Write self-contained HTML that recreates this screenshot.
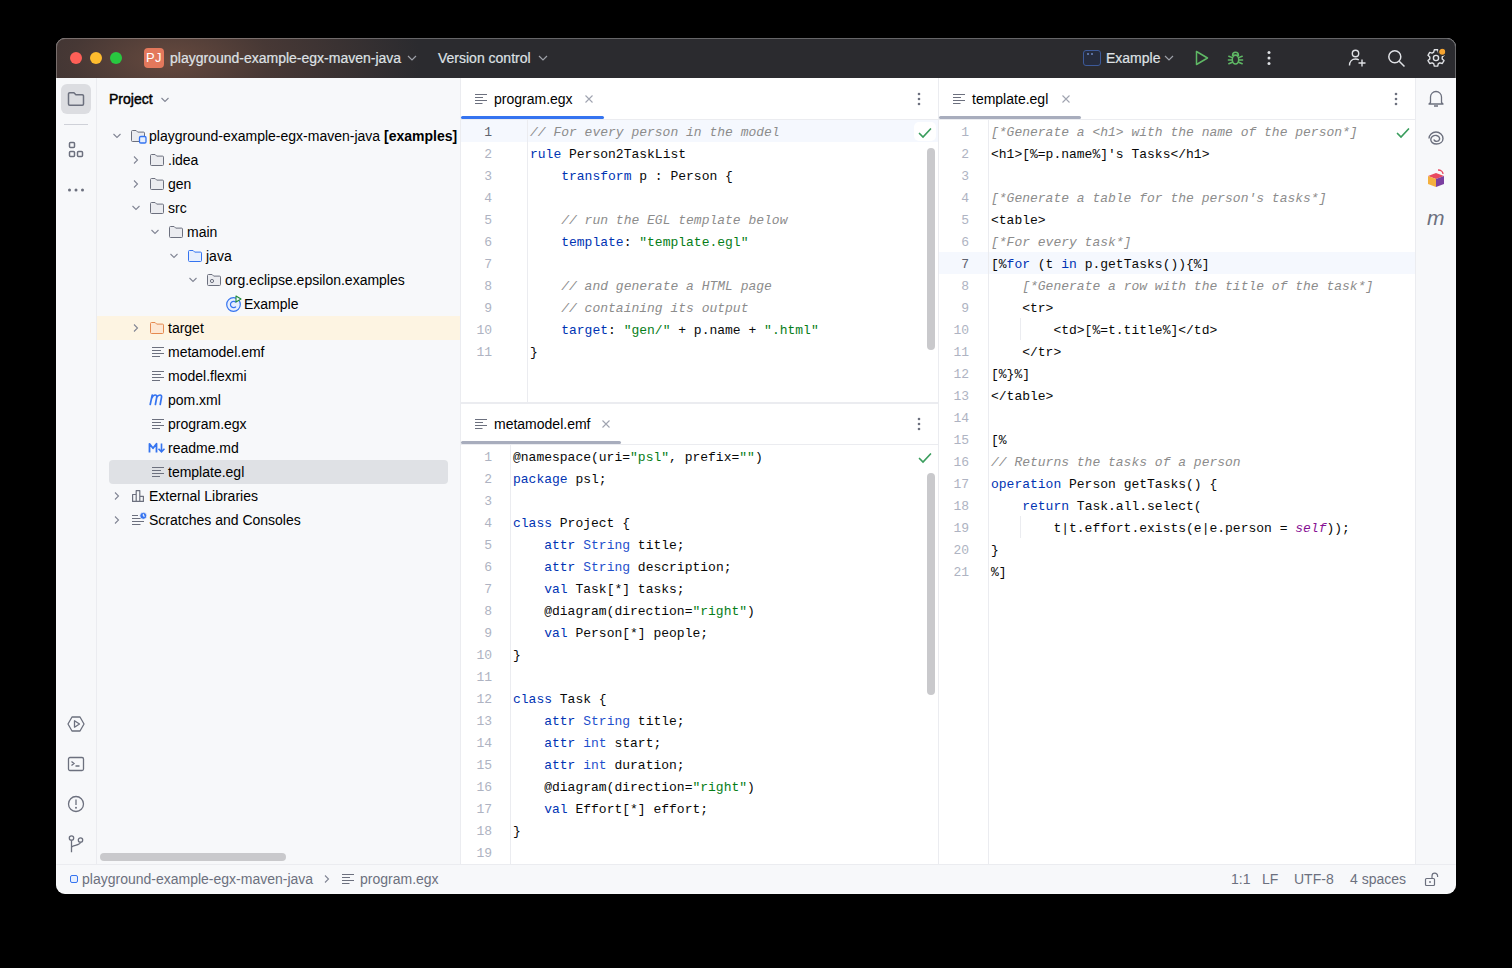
<!DOCTYPE html>
<html><head><meta charset="utf-8">
<style>
*{margin:0;padding:0;box-sizing:border-box}
html,body{width:1512px;height:968px;background:#000;overflow:hidden}
body{font-family:"Liberation Sans",sans-serif;font-size:14px;color:#000;position:relative}
.a{position:absolute}
#win{position:absolute;left:56px;top:38px;width:1400px;height:856px;border-radius:9px;overflow:hidden;background:#f7f8fa}
#outl{position:absolute;left:56px;top:38px;width:1400px;height:856px;border-radius:9px;border:1px solid rgba(255,255,255,0.28);pointer-events:none}
#title{position:absolute;left:0;top:0;width:1400px;height:40px;overflow:hidden;background:#2b2b2f;color:#dfe1e5}
.tl{position:absolute;top:14px;width:12px;height:12px;border-radius:50%}
.mono{font-family:"Liberation Mono",monospace;font-size:13px}
.ed{position:absolute;background:#fff;overflow:hidden}
.ln{position:absolute;text-align:right;color:#aeb3c2;font-family:"Liberation Mono",monospace;font-size:13px}
.code{position:absolute;font-family:"Liberation Mono",monospace;font-size:13px;white-space:pre;color:#080808}
.row{height:22px;line-height:22px}
.ln,.code{margin-top:2px}
.k{color:#0033b3}
.t{color:#1f4fcc}
.s{color:#067d17}
.c{color:#8c8c8c;font-style:italic}
.p{color:#871094;font-style:italic}
.tree{position:absolute;white-space:nowrap;font-size:14px;color:#000;line-height:24px;height:24px}
.st{color:#6c707e}
</style></head><body>
<div id="win">
  <div id="title">
    <div class="a" style="left:0;top:0;width:1400px;height:40px;background:radial-gradient(ellipse 250px 110px at 115px 22px,rgba(125,85,68,0.72) 0%,rgba(105,72,60,0.45) 40%,rgba(39,40,44,0) 100%)"></div>
    <div class="tl" style="left:14px;background:#fe5f57"></div>
    <div class="tl" style="left:34px;background:#febc2e"></div>
    <div class="tl" style="left:54px;background:#28c840"></div>
    <div class="a" style="left:88px;top:10px;width:20px;height:20px;border-radius:4px;background:#e3785c;color:#fff;font-size:13px;line-height:20px;text-align:center;letter-spacing:0.5px">PJ</div>
    <div class="a" style="left:114px;top:0;height:40px;line-height:40px;font-size:14px;color:#dfe1e5;-webkit-text-stroke:0.2px #dfe1e5">playground-example-egx-maven-java</div>
    <svg class="a" style="left:350px;top:16px" width="12" height="8" viewBox="0 0 12 8"><path d="M2 2l4 4 4-4" fill="none" stroke="#9da0a8" stroke-width="1.2"/></svg>
    <div class="a" style="left:382px;top:0;height:40px;line-height:40px;font-size:14px;color:#dfe1e5;-webkit-text-stroke:0.2px #dfe1e5">Version control</div>
    <svg class="a" style="left:481px;top:16px" width="12" height="8" viewBox="0 0 12 8"><path d="M2 2l4 4 4-4" fill="none" stroke="#9da0a8" stroke-width="1.2"/></svg>
    <!-- run config -->
    <div class="a" style="left:1027px;top:12px;width:18px;height:16px;border:1.3px solid #3d5a99;border-radius:3px;background:#262c3d"><div class="a" style="left:3px;top:2px;width:2px;height:1.5px;background:#5a6f9e"></div><div class="a" style="left:7px;top:2px;width:2px;height:1.5px;background:#5a6f9e"></div></div>
    <div class="a" style="left:1050px;top:0;height:40px;line-height:40px;font-size:14px;color:#dfe1e5;-webkit-text-stroke:0.2px #dfe1e5">Example</div>
    <svg class="a" style="left:1107px;top:16px" width="12" height="8" viewBox="0 0 12 8"><path d="M2 2l4 4 4-4" fill="none" stroke="#9da0a8" stroke-width="1.2"/></svg>
    <svg class="a" style="left:1136px;top:11px" width="18" height="18" viewBox="0 0 18 18"><path d="M4.5 2.5v13l11-6.5z" fill="none" stroke="#5fb865" stroke-width="1.5" stroke-linejoin="round"/></svg>
    <svg class="a" style="left:1170px;top:11px" width="19" height="18" viewBox="0 0 19 18"><g fill="none" stroke="#5fb865" stroke-width="1.5" stroke-linecap="round"><path d="M6.6 6.2a2.9 2.9 0 0 1 5.8 0z"/><ellipse cx="9.5" cy="10.6" rx="3.2" ry="4.4"/><path d="M6.3 8.6L2.8 7.2M12.7 8.6l3.5-1.4M6.3 10.9H2.4M12.7 10.9h3.9M6.3 13.2l-3.5 1.6M12.7 13.2l3.5 1.6"/></g></svg>
    <svg class="a" style="left:1206px;top:11px" width="14" height="18" viewBox="0 0 14 18"><g fill="#dfe1e5"><circle cx="7" cy="3.5" r="1.5"/><circle cx="7" cy="9" r="1.5"/><circle cx="7" cy="14.5" r="1.5"/></g></svg>
    <svg class="a" style="left:1291px;top:10px" width="20" height="20" viewBox="0 0 20 20"><g fill="none" stroke="#dfe1e5" stroke-width="1.4"><circle cx="8.5" cy="5.5" r="3.2"/><path d="M2.5 17.5c0-4 2.6-6.5 6-6.5 1.3 0 2.4 0.3 3.3 0.9"/><path d="M15 11.5v7M11.5 15h7"/></g></svg>
    <svg class="a" style="left:1331px;top:11px" width="19" height="19" viewBox="0 0 19 19"><g fill="none" stroke="#dfe1e5" stroke-width="1.5"><circle cx="7.8" cy="7.8" r="6"/><path d="M12.2 12.2l5.3 5.3"/></g></svg>
    <svg class="a" style="left:1370px;top:10px" width="20" height="20" viewBox="0 0 20 20"><g fill="none" stroke="#dfe1e5" stroke-width="1.4"><path d="M8.3 1.8h3.4l.6 2.4 1.6.9 2.4-.7 1.7 2.9-1.8 1.7v1.9l1.8 1.7-1.7 2.9-2.4-.7-1.6.9-.6 2.4H8.3l-.6-2.4-1.6-.9-2.4.7-1.7-2.9 1.8-1.7V9l-1.8-1.7 1.7-2.9 2.4.7 1.6-.9z" stroke-linejoin="round"/><circle cx="10" cy="10" r="2.6"/></g><circle cx="16.2" cy="3.8" r="3.6" fill="#f5a431" stroke="#2b2b2f" stroke-width="1.2"/></svg>
  </div>
  <!-- left strip -->
<div class="a" style="left:5px;top:46px;width:30px;height:30px;border-radius:6px;background:#dcdde1"></div>
<svg class="a" style="left:10px;top:51px" width="20" height="20" viewBox="0 0 20 20"><path d="M2.5 5a1.2 1.2 0 0 1 1.2-1.2h4.2l2 2h6.4A1.2 1.2 0 0 1 17.5 7v8a1.2 1.2 0 0 1-1.2 1.2H3.7A1.2 1.2 0 0 1 2.5 15z" fill="none" stroke="#6c707e" stroke-width="1.5"/></svg>
<div class="a" style="left:8px;top:86px;width:24px;height:1px;background:#cfd1d8"></div>
<svg class="a" style="left:10px;top:102px" width="20" height="20" viewBox="0 0 20 20"><g fill="none" stroke="#6c707e" stroke-width="1.5"><rect x="3.5" y="2.5" width="5" height="5" rx="1"/><rect x="3.5" y="11.5" width="5" height="5" rx="1"/><rect x="11.5" y="11.5" width="5" height="5" rx="1"/></g></svg>
<svg class="a" style="left:10px;top:142px" width="20" height="20" viewBox="0 0 20 20"><g fill="#6c707e"><circle cx="3.5" cy="10" r="1.5"/><circle cx="10" cy="10" r="1.5"/><circle cx="16.5" cy="10" r="1.5"/></g></svg>
<svg class="a" style="left:10px;top:676px" width="20" height="20" viewBox="0 0 20 20"><g fill="none" stroke="#6c707e" stroke-width="1.3" stroke-linejoin="round"><path d="M6 3h8l4 7-4 7H6l-4-7z"/><path d="M8.5 6.8v6.4l5-3.2z"/></g></svg>
<svg class="a" style="left:10px;top:716px" width="20" height="20" viewBox="0 0 20 20"><g fill="none" stroke="#6c707e" stroke-width="1.3"><rect x="2.5" y="3.5" width="15" height="13" rx="1.5"/><path d="M5.5 7.5l2.5 2-2.5 2M9.5 12h4"/></g></svg>
<svg class="a" style="left:10px;top:756px" width="20" height="20" viewBox="0 0 20 20"><g fill="none" stroke="#6c707e" stroke-width="1.3"><circle cx="10" cy="10" r="7.5"/><path d="M10 5.5v5.5"/></g><circle cx="10" cy="13.8" r="1" fill="#6c707e"/></svg>
<svg class="a" style="left:10px;top:796px" width="20" height="20" viewBox="0 0 20 20"><g fill="none" stroke="#6c707e" stroke-width="1.3"><circle cx="5.5" cy="4" r="2.2"/><circle cx="14.5" cy="6" r="2.2"/><path d="M5.5 6.2v12M5.5 13.5c0-2.5 9-2 9-5.3"/></g></svg>
<div class="a" style="left:53px;top:52px;height:18px;line-height:18px;font-size:14px;color:#000;-webkit-text-stroke:0.45px #000">Project</div>
<svg class="a" style="left:104px;top:57px" width="10" height="10" viewBox="0 0 10 10"><path d="M1.5 3l3.5 3.5 3.5-3.5" fill="none" stroke="#818594" stroke-width="1.1"/></svg>
<div class="a" style="left:41px;top:278px;width:363px;height:24px;background:#fdf4e2"></div>
<div class="a" style="left:53px;top:422px;width:339px;height:24px;border-radius:4px;background:#dfe1e5"></div>
<svg class="a" style="left:56px;top:93px" width="10" height="10" viewBox="0 0 10 10"><path d="M1.5 3l3.5 3.5 3.5-3.5" fill="none" stroke="#818594" stroke-width="1.1"/></svg>
<svg class="a" style="left:74px;top:90px" width="18" height="17" viewBox="0 0 18 17"><path d="M1.5 3.5a1 1 0 0 1 1-1h3.6l1.6 1.6h5.8a1 1 0 0 1 1 1v7.4a1 1 0 0 1-1 1H2.5a1 1 0 0 1-1-1z" fill="#ebecf0" stroke="#6c707e" stroke-width="1"/><rect x="9.5" y="8.5" width="6.5" height="6.5" rx="1.3" fill="#e7effd" stroke="#3574f0" stroke-width="1.3"/></svg>
<div class="tree" style="left:93px;top:86px;">playground-example-egx-maven-java <b>[examples]</b></div>
<svg class="a" style="left:75px;top:117px" width="10" height="10" viewBox="0 0 10 10"><path d="M3 1.5l3.5 3.5-3.5 3.5" fill="none" stroke="#818594" stroke-width="1.1"/></svg>
<svg class="a" style="left:93px;top:114px" width="16" height="16" viewBox="0 0 16 16"><path d="M1.5 3.5a1 1 0 0 1 1-1h3.6l1.6 1.6h5.8a1 1 0 0 1 1 1v7.4a1 1 0 0 1-1 1H2.5a1 1 0 0 1-1-1z" fill="#ebecf0" stroke="#6c707e" stroke-width="1"/></svg>
<div class="tree" style="left:112px;top:110px;">.idea</div>
<svg class="a" style="left:75px;top:141px" width="10" height="10" viewBox="0 0 10 10"><path d="M3 1.5l3.5 3.5-3.5 3.5" fill="none" stroke="#818594" stroke-width="1.1"/></svg>
<svg class="a" style="left:93px;top:138px" width="16" height="16" viewBox="0 0 16 16"><path d="M1.5 3.5a1 1 0 0 1 1-1h3.6l1.6 1.6h5.8a1 1 0 0 1 1 1v7.4a1 1 0 0 1-1 1H2.5a1 1 0 0 1-1-1z" fill="#ebecf0" stroke="#6c707e" stroke-width="1"/></svg>
<div class="tree" style="left:112px;top:134px;">gen</div>
<svg class="a" style="left:75px;top:165px" width="10" height="10" viewBox="0 0 10 10"><path d="M1.5 3l3.5 3.5 3.5-3.5" fill="none" stroke="#818594" stroke-width="1.1"/></svg>
<svg class="a" style="left:93px;top:162px" width="16" height="16" viewBox="0 0 16 16"><path d="M1.5 3.5a1 1 0 0 1 1-1h3.6l1.6 1.6h5.8a1 1 0 0 1 1 1v7.4a1 1 0 0 1-1 1H2.5a1 1 0 0 1-1-1z" fill="#ebecf0" stroke="#6c707e" stroke-width="1"/></svg>
<div class="tree" style="left:112px;top:158px;">src</div>
<svg class="a" style="left:94px;top:189px" width="10" height="10" viewBox="0 0 10 10"><path d="M1.5 3l3.5 3.5 3.5-3.5" fill="none" stroke="#818594" stroke-width="1.1"/></svg>
<svg class="a" style="left:112px;top:186px" width="16" height="16" viewBox="0 0 16 16"><path d="M1.5 3.5a1 1 0 0 1 1-1h3.6l1.6 1.6h5.8a1 1 0 0 1 1 1v7.4a1 1 0 0 1-1 1H2.5a1 1 0 0 1-1-1z" fill="#ebecf0" stroke="#6c707e" stroke-width="1"/></svg>
<div class="tree" style="left:131px;top:182px;">main</div>
<svg class="a" style="left:113px;top:213px" width="10" height="10" viewBox="0 0 10 10"><path d="M1.5 3l3.5 3.5 3.5-3.5" fill="none" stroke="#818594" stroke-width="1.1"/></svg>
<svg class="a" style="left:131px;top:210px" width="16" height="16" viewBox="0 0 16 16"><path d="M1.5 3.5a1 1 0 0 1 1-1h3.6l1.6 1.6h5.8a1 1 0 0 1 1 1v7.4a1 1 0 0 1-1 1H2.5a1 1 0 0 1-1-1z" fill="#e7effd" stroke="#3574f0" stroke-width="1"/></svg>
<div class="tree" style="left:150px;top:206px;">java</div>
<svg class="a" style="left:132px;top:237px" width="10" height="10" viewBox="0 0 10 10"><path d="M1.5 3l3.5 3.5 3.5-3.5" fill="none" stroke="#818594" stroke-width="1.1"/></svg>
<svg class="a" style="left:150px;top:234px" width="16" height="16" viewBox="0 0 16 16"><path d="M1.5 3.5a1 1 0 0 1 1-1h3.6l1.6 1.6h5.8a1 1 0 0 1 1 1v7.4a1 1 0 0 1-1 1H2.5a1 1 0 0 1-1-1z" fill="#ebecf0" stroke="#6c707e" stroke-width="1"/><circle cx="6" cy="9" r="1.6" fill="none" stroke="#6c707e" stroke-width="1"/></svg>
<div class="tree" style="left:169px;top:230px;">org.eclipse.epsilon.examples</div>
<svg class="a" style="left:169px;top:257px" width="18" height="18" viewBox="0 0 18 18"><circle cx="8.5" cy="9.5" r="6.8" fill="#e7effd" stroke="#3574f0" stroke-width="1.2"/><path d="M11 7.3a3.2 3.2 0 1 0 0 4.4" fill="none" stroke="#3574f0" stroke-width="1.2"/><path d="M11 1v6l5-3z" fill="#f7f8fa" stroke="#208a3c" stroke-width="1.1" stroke-linejoin="round"/></svg>
<div class="tree" style="left:188px;top:254px;">Example</div>
<svg class="a" style="left:75px;top:285px" width="10" height="10" viewBox="0 0 10 10"><path d="M3 1.5l3.5 3.5-3.5 3.5" fill="none" stroke="#818594" stroke-width="1.1"/></svg>
<svg class="a" style="left:93px;top:282px" width="16" height="16" viewBox="0 0 16 16"><path d="M1.5 3.5a1 1 0 0 1 1-1h3.6l1.6 1.6h5.8a1 1 0 0 1 1 1v7.4a1 1 0 0 1-1 1H2.5a1 1 0 0 1-1-1z" fill="#fde7d3" stroke="#e5894f" stroke-width="1"/></svg>
<div class="tree" style="left:112px;top:278px;">target</div>
<svg class="a" style="left:94px;top:306px" width="16" height="16" viewBox="0 0 16 16"><path d="M2 3.5h12M2 6.5h9M2 9.5h12M2 12.5h8" stroke="#6c707e" stroke-width="1.1" fill="none"/></svg>
<div class="tree" style="left:112px;top:302px;">metamodel.emf</div>
<svg class="a" style="left:94px;top:330px" width="16" height="16" viewBox="0 0 16 16"><path d="M2 3.5h12M2 6.5h9M2 9.5h12M2 12.5h8" stroke="#6c707e" stroke-width="1.1" fill="none"/></svg>
<div class="tree" style="left:112px;top:326px;">model.flexmi</div>
<svg class="a" style="left:94px;top:378px" width="16" height="16" viewBox="0 0 16 16"><path d="M2 3.5h12M2 6.5h9M2 9.5h12M2 12.5h8" stroke="#6c707e" stroke-width="1.1" fill="none"/></svg>
<div class="tree" style="left:112px;top:374px;">program.egx</div>
<svg class="a" style="left:94px;top:426px" width="16" height="16" viewBox="0 0 16 16"><path d="M2 3.5h12M2 6.5h9M2 9.5h12M2 12.5h8" stroke="#6c707e" stroke-width="1.1" fill="none"/></svg>
<div class="tree" style="left:112px;top:422px;">template.egl</div>
<svg class="a" style="left:93px;top:354px" width="16" height="14" viewBox="0 0 16 14"><path d="M1.2 12.5L3.2 3.2M2.6 6.3C3.6 4 5 3 6.2 3c1.3 0 1.8.9 1.5 2.3L6.4 12.5M7.6 5.5C8.6 3.8 9.8 3 11 3c1.3 0 1.8.9 1.5 2.3l-1.3 7.2" fill="none" stroke="#3574f0" stroke-width="1.7" stroke-linecap="round"/></svg>
<div class="tree" style="left:112px;top:350px;">pom.xml</div>
<svg class="a" style="left:92px;top:404px" width="18" height="12" viewBox="0 0 18 12"><path d="M1.5 10.5V1.8l3.5 4.5 3.5-4.5v8.7" fill="none" stroke="#3574f0" stroke-width="1.8" stroke-linejoin="round"/><path d="M13.5 1.5v8M10.5 6.8l3 3 3-3" fill="none" stroke="#3574f0" stroke-width="1.6"/></svg>
<div class="tree" style="left:112px;top:398px;">readme.md</div>
<svg class="a" style="left:56px;top:453px" width="10" height="10" viewBox="0 0 10 10"><path d="M3 1.5l3.5 3.5-3.5 3.5" fill="none" stroke="#818594" stroke-width="1.1"/></svg>
<svg class="a" style="left:75px;top:450px" width="16" height="16" viewBox="0 0 16 16"><g fill="none" stroke="#6c707e" stroke-width="1.2" stroke-linejoin="round"><path d="M1.6 13.4V6.5h3.6v6.9zM5.2 13.4V2.6h3.6v10.8zM8.8 13.4V8.3h3.6v5.1z"/></g></svg>
<div class="tree" style="left:93px;top:446px;">External Libraries</div>
<svg class="a" style="left:56px;top:477px" width="10" height="10" viewBox="0 0 10 10"><path d="M3 1.5l3.5 3.5-3.5 3.5" fill="none" stroke="#818594" stroke-width="1.1"/></svg>
<svg class="a" style="left:75px;top:473px" width="18" height="18" viewBox="0 0 18 18"><g stroke="#6c707e" stroke-width="1.2"><path d="M1 4.5h6M1 7.5h9M1 10.5h12M1 13.5h8.5"/></g><circle cx="12.3" cy="4.8" r="3.5" fill="#3574f0" stroke="#f7f8fa" stroke-width="0.8"/><path d="M12.3 2.8v2.3h1.5" stroke="#fff" stroke-width="1" fill="none"/></svg>
<div class="tree" style="left:93px;top:470px;">Scratches and Consoles</div>
<div class="a" style="left:44px;top:815px;width:186px;height:8px;border-radius:4px;background:#c9c9cc"></div>
  <div class="a" style="left:40px;top:40px;width:1px;height:786px;background:#ebecf0"></div>
  <!-- project panel border -->
  <div class="a" style="left:404px;top:40px;width:1px;height:786px;background:#ebecf0"></div>
  <!-- editors -->
  <div class="ed" style="left:405px;top:40px;width:477px;height:325px"></div>
  <div class="ed" style="left:405px;top:366px;width:477px;height:460px"></div>
  <div class="a" style="left:882px;top:40px;width:1px;height:786px;background:#ebecf0"></div>
  <div class="ed" style="left:883px;top:40px;width:476px;height:786px"></div>
  <div class="a" style="left:1359px;top:40px;width:1px;height:786px;background:#ebecf0"></div>
<div class="a" style="left:405px;top:81px;width:477px;height:1px;background:#ebecf0"></div>
<div class="a" style="left:405px;top:78px;width:143px;height:3px;border-radius:2px;background:#3574f0"></div>
<svg class="a" style="left:418px;top:53px" width="14" height="16" viewBox="0 0 14 16"><path d="M1 3.5h12M1 6.5h8M1 9.5h12M1 12.5h7.5" stroke="#6c707e" stroke-width="1.1" fill="none"/></svg>
<div class="a" style="left:438px;top:51px;height:20px;line-height:20px;font-size:14px;color:#000">program.egx</div>
<svg class="a" style="left:528px;top:56px" width="10" height="10" viewBox="0 0 10 10"><path d="M1.5 1.5l7 7M8.5 1.5l-7 7" stroke="#a0a4b0" stroke-width="1.1"/></svg>
<svg class="a" style="left:861px;top:54px" width="4" height="14" viewBox="0 0 4 14"><g fill="#6c707e"><circle cx="2" cy="2" r="1.3"/><circle cx="2" cy="7" r="1.3"/><circle cx="2" cy="12" r="1.3"/></g></svg>
<div class="a" style="left:405px;top:82px;width:477px;height:22px;background:#f5f8fe"></div><div class="a" style="left:858px;top:84px;width:22px;height:19px;border-radius:5px;background:#fff"></div>
<div class="a" style="left:471px;top:82px;width:1px;height:283px;background:#ebecf0"></div>
<div class="ln" style="left:406px;width:30px;top:82px"><div class="row" style="color:#5f6370">1</div><div class="row">2</div><div class="row">3</div><div class="row">4</div><div class="row">5</div><div class="row">6</div><div class="row">7</div><div class="row">8</div><div class="row">9</div><div class="row">10</div><div class="row">11</div></div>
<div class="code" style="left:474px;top:82px"><div class="row"><span class="c">// For every person in the model</span></div><div class="row"><span class="k">rule</span> Person2TaskList</div><div class="row">    <span class="k">transform</span> p : Person {</div><div class="row">&#8203;</div><div class="row">    <span class="c">// run the EGL template below</span></div><div class="row">    <span class="k">template</span>: <span class="s">"template.egl"</span></div><div class="row">&#8203;</div><div class="row">    <span class="c">// and generate a HTML page</span></div><div class="row">    <span class="c">// containing its output</span></div><div class="row">    <span class="k">target</span>: <span class="s">"gen/"</span> + p.name + <span class="s">".html"</span></div><div class="row">}</div></div>
<svg class="a" style="left:862px;top:89px" width="14" height="12" viewBox="0 0 14 12"><path d="M1.5 6.5l3.5 3.5 7.5-8" fill="none" stroke="#3a9d5d" stroke-width="1.7" stroke-linecap="round"/></svg>
<div class="a" style="left:871px;top:110px;width:8px;height:202px;border-radius:4px;background:#c9c9cc"></div>
<div class="a" style="left:405px;top:364px;width:477px;height:2px;background:#ebecf0"></div>
<div class="a" style="left:405px;top:406px;width:477px;height:1px;background:#ebecf0"></div>
<div class="a" style="left:405px;top:403px;width:160px;height:3px;border-radius:2px;background:#a8adbd"></div>
<svg class="a" style="left:418px;top:378px" width="14" height="16" viewBox="0 0 14 16"><path d="M1 3.5h12M1 6.5h8M1 9.5h12M1 12.5h7.5" stroke="#6c707e" stroke-width="1.1" fill="none"/></svg>
<div class="a" style="left:438px;top:376px;height:20px;line-height:20px;font-size:14px;color:#000">metamodel.emf</div>
<svg class="a" style="left:545px;top:381px" width="10" height="10" viewBox="0 0 10 10"><path d="M1.5 1.5l7 7M8.5 1.5l-7 7" stroke="#a0a4b0" stroke-width="1.1"/></svg>
<svg class="a" style="left:861px;top:379px" width="4" height="14" viewBox="0 0 4 14"><g fill="#6c707e"><circle cx="2" cy="2" r="1.3"/><circle cx="2" cy="7" r="1.3"/><circle cx="2" cy="12" r="1.3"/></g></svg>
<div class="a" style="left:454px;top:407px;width:1px;height:419px;background:#ebecf0"></div>
<div class="ln" style="left:406px;width:30px;top:407px"><div class="row">1</div><div class="row">2</div><div class="row">3</div><div class="row">4</div><div class="row">5</div><div class="row">6</div><div class="row">7</div><div class="row">8</div><div class="row">9</div><div class="row">10</div><div class="row">11</div><div class="row">12</div><div class="row">13</div><div class="row">14</div><div class="row">15</div><div class="row">16</div><div class="row">17</div><div class="row">18</div><div class="row">19</div></div>
<div class="code" style="left:457px;top:407px"><div class="row">@namespace(uri=<span class="s">"psl"</span>, prefix=<span class="s">""</span>)</div><div class="row"><span class="k">package</span> psl;</div><div class="row">&#8203;</div><div class="row"><span class="k">class</span> Project {</div><div class="row">    <span class="k">attr</span> <span class="t">String</span> title;</div><div class="row">    <span class="k">attr</span> <span class="t">String</span> description;</div><div class="row">    <span class="k">val</span> Task[*] tasks;</div><div class="row">    @diagram(direction=<span class="s">"right"</span>)</div><div class="row">    <span class="k">val</span> Person[*] people;</div><div class="row">}</div><div class="row">&#8203;</div><div class="row"><span class="k">class</span> Task {</div><div class="row">    <span class="k">attr</span> <span class="t">String</span> title;</div><div class="row">    <span class="k">attr</span> <span class="t">int</span> start;</div><div class="row">    <span class="k">attr</span> <span class="t">int</span> duration;</div><div class="row">    @diagram(direction=<span class="s">"right"</span>)</div><div class="row">    <span class="k">val</span> Effort[*] effort;</div><div class="row">}</div><div class="row">&#8203;</div></div>
<svg class="a" style="left:862px;top:414px" width="14" height="12" viewBox="0 0 14 12"><path d="M1.5 6.5l3.5 3.5 7.5-8" fill="none" stroke="#3a9d5d" stroke-width="1.7" stroke-linecap="round"/></svg>
<div class="a" style="left:871px;top:435px;width:8px;height:222px;border-radius:4px;background:#c9c9cc"></div>
<div class="a" style="left:883px;top:81px;width:476px;height:1px;background:#ebecf0"></div>
<div class="a" style="left:883px;top:78px;width:142px;height:3px;border-radius:2px;background:#a8adbd"></div>
<svg class="a" style="left:896px;top:53px" width="14" height="16" viewBox="0 0 14 16"><path d="M1 3.5h12M1 6.5h8M1 9.5h12M1 12.5h7.5" stroke="#6c707e" stroke-width="1.1" fill="none"/></svg>
<div class="a" style="left:916px;top:51px;height:20px;line-height:20px;font-size:14px;color:#000">template.egl</div>
<svg class="a" style="left:1005px;top:56px" width="10" height="10" viewBox="0 0 10 10"><path d="M1.5 1.5l7 7M8.5 1.5l-7 7" stroke="#a0a4b0" stroke-width="1.1"/></svg>
<svg class="a" style="left:1338px;top:54px" width="4" height="14" viewBox="0 0 4 14"><g fill="#6c707e"><circle cx="2" cy="2" r="1.3"/><circle cx="2" cy="7" r="1.3"/><circle cx="2" cy="12" r="1.3"/></g></svg>
<div class="a" style="left:883px;top:214px;width:476px;height:22px;background:#f5f8fe"></div>
<div class="a" style="left:932px;top:82px;width:1px;height:744px;background:#ebecf0"></div>
<div class="ln" style="left:883px;width:30px;top:82px"><div class="row">1</div><div class="row">2</div><div class="row">3</div><div class="row">4</div><div class="row">5</div><div class="row">6</div><div class="row" style="color:#5f6370">7</div><div class="row">8</div><div class="row">9</div><div class="row">10</div><div class="row">11</div><div class="row">12</div><div class="row">13</div><div class="row">14</div><div class="row">15</div><div class="row">16</div><div class="row">17</div><div class="row">18</div><div class="row">19</div><div class="row">20</div><div class="row">21</div></div>
<div class="code" style="left:935px;top:82px"><div class="row"><span class="c">[*Generate a &lt;h1&gt; with the name of the person*]</span></div><div class="row">&lt;h1&gt;[%=p.name%]'s Tasks&lt;/h1&gt;</div><div class="row">&#8203;</div><div class="row"><span class="c">[*Generate a table for the person's tasks*]</span></div><div class="row">&lt;table&gt;</div><div class="row"><span class="c">[*For every task*]</span></div><div class="row">[%<span class="k">for</span> (t <span class="k">in</span> p.getTasks()){%]</div><div class="row">    <span class="c">[*Generate a row with the title of the task*]</span></div><div class="row">    &lt;tr&gt;</div><div class="row">        &lt;td&gt;[%=t.title%]&lt;/td&gt;</div><div class="row">    &lt;/tr&gt;</div><div class="row">[%}%]</div><div class="row">&lt;/table&gt;</div><div class="row">&#8203;</div><div class="row">[%</div><div class="row"><span class="c">// Returns the tasks of a person</span></div><div class="row"><span class="k">operation</span> Person getTasks() {</div><div class="row">    <span class="k">return</span> Task.all.select(</div><div class="row">        t|t.effort.exists(e|e.person = <span class="p">self</span>));</div><div class="row">}</div><div class="row">%]</div></div>
<div class="a" style="left:964px;top:280px;width:1px;height:22px;background:#ebecf0"></div>
<div class="a" style="left:964px;top:478px;width:1px;height:22px;background:#ebecf0"></div>
<svg class="a" style="left:1340px;top:89px" width="14" height="12" viewBox="0 0 14 12"><path d="M1.5 6.5l3.5 3.5 7.5-8" fill="none" stroke="#3a9d5d" stroke-width="1.7" stroke-linecap="round"/></svg>
<svg class="a" style="left:1370px;top:50px" width="20" height="20" viewBox="0 0 20 20"><g fill="none" stroke="#6c707e" stroke-width="1.3"><path d="M4.5 14.5V9a5.5 5.5 0 0 1 11 0v5.5l1.5 1.5H3z" stroke-linejoin="round"/><path d="M8 18h4"/></g></svg>
<svg class="a" style="left:1370px;top:91px" width="20" height="20" viewBox="0 0 20 20"><g fill="none" stroke="#6c707e" stroke-width="1.4"><path d="M3 9.5a7 6.5 0 0 1 14 0c0 3.5-3 5.5-6.5 5.5S4.5 13 4.8 10.2C5.2 7.2 8 6 10.5 6.5s3.5 2.5 3 4-2 2-3.5 1.8-2-1.2-1.8-2"/></g></svg>
<svg class="a" style="left:1369px;top:130px" width="22" height="22" viewBox="0 0 22 22"><path d="M3 8l8-3 8 3-8 3z" fill="#e84a5f"/><path d="M3 8v8l8 3v-8z" fill="#f4b03e"/><path d="M19 8v8l-8 3v-8z" fill="#7b3fa0"/><path d="M13 2c3 0 5 2 5 4" stroke="#e84a5f" stroke-width="1.3" fill="none"/></svg>
<div class="a" style="left:1371px;top:168px;height:24px;line-height:24px;font-size:21px;font-style:italic;color:#6c707e">m</div>
<div class="a" style="left:14px;top:837px;width:8px;height:8px;border:1.2px solid #3574f0;border-radius:2px;background:#e7effd"></div>
<div class="a st" style="left:26px;top:831px;height:20px;line-height:20px;font-size:14px">playground-example-egx-maven-java</div>
<svg class="a" style="left:266px;top:836px" width="10" height="10" viewBox="0 0 10 10"><path d="M3 1.5l3.5 3.5-3.5 3.5" fill="none" stroke="#818594" stroke-width="1.1"/></svg>
<svg class="a" style="left:285px;top:833px" width="14" height="16" viewBox="0 0 14 16"><path d="M1 3.5h12M1 6.5h8M1 9.5h12M1 12.5h7.5" stroke="#6c707e" stroke-width="1.1" fill="none"/></svg>
<div class="a st" style="left:304px;top:831px;height:20px;line-height:20px;font-size:14px">program.egx</div>
<div class="a st" style="left:1175px;top:831px;height:20px;line-height:20px;font-size:14px">1:1</div>
<div class="a st" style="left:1206px;top:831px;height:20px;line-height:20px;font-size:14px">LF</div>
<div class="a st" style="left:1238px;top:831px;height:20px;line-height:20px;font-size:14px">UTF-8</div>
<div class="a st" style="left:1294px;top:831px;height:20px;line-height:20px;font-size:14px">4 spaces</div>
<svg class="a" style="left:1368px;top:833px" width="16" height="16" viewBox="0 0 16 16"><g fill="none" stroke="#6c707e" stroke-width="1.2"><rect x="1.5" y="7.5" width="9" height="7" rx="1"/><path d="M8 7.5V5a2.8 2.8 0 0 1 5.6 0v1"/></g><circle cx="6" cy="11" r="0.9" fill="#6c707e"/></svg>
  <!-- status bar -->
  <div class="a" style="left:0;top:826px;width:1400px;height:1px;background:#ebecf0"></div>
</div>
<div id="outl"></div>
</body></html>
